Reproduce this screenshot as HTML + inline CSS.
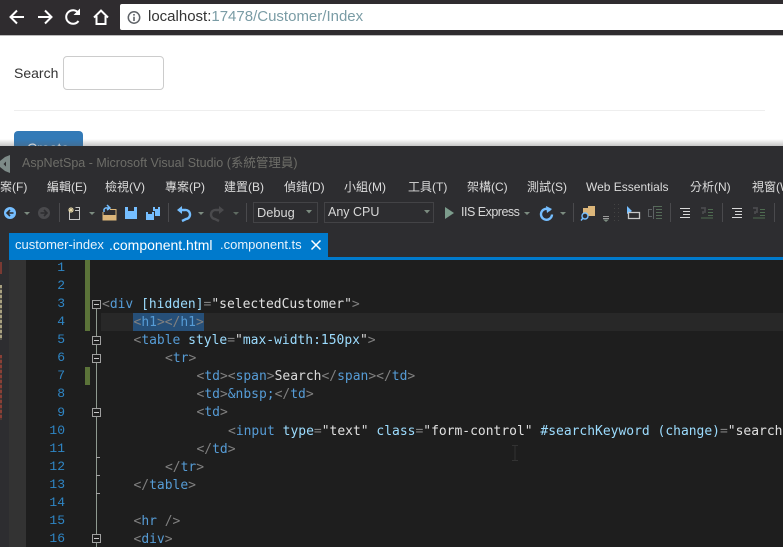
<!DOCTYPE html>
<html><head><meta charset="utf-8">
<style>
html,body{margin:0;padding:0;width:783px;height:547px;overflow:hidden;background:#fff}
body{position:relative;font-family:"Liberation Sans","Noto Sans CJK TC",sans-serif}
.a{position:absolute}
.t{position:absolute;white-space:pre}
.m{position:absolute;top:179px;font-size:12px;line-height:17px;color:#dcdcdc;white-space:pre}
.l{position:absolute;left:0;width:65px;text-align:right;font:13px/18px "Liberation Mono",monospace;color:#2f86c5}
.c{position:absolute;white-space:pre;font:12.98px/18px "DejaVu Sans Mono","Liberation Mono",monospace;color:#dcdcdc}
.c i{font-style:normal;color:#808080}
.c b{font-weight:normal;color:#569cd6}
.c u{text-decoration:none;color:#9cdcfe}
.c s{text-decoration:none;color:#e0e0e0}
.box{position:absolute;left:92px;width:7px;height:7px;border:1px solid #a0a0a0;background:#1e1e1e}
.box:after{content:"";position:absolute;left:1px;top:3px;width:5px;height:1px;background:#c8c8c8}
.tick{position:absolute;left:96px;width:4px;height:1px;background:#a5a5a5}
.sep{position:absolute;top:203px;width:1px;height:19px;background:#4a4a4d}
</style></head><body>

<!-- browser toolbar -->
<div class="a" style="left:0;top:0;width:783px;height:35px;background:#2f2c2f"></div>
<svg class="a" style="left:0;top:0" width="118" height="35" viewBox="0 0 118 35" fill="none" stroke="#fff" stroke-width="2">
<path d="M24 17H11M17 10.5L10.5 17L17 23.5"/>
<path d="M38 17H51M45 10.5L51.5 17L45 23.5"/>
<path d="M78.5 21A6.8 6.8 0 1 1 78.5 13"/><path d="M80 8.5V15H73.5Z" fill="#fff" stroke="none"/>
<path d="M94 17.5L101 10.5L108 17.5M96.5 16V24H105.5V16"/>
</svg>
<div class="a" style="left:120px;top:4px;width:663px;height:26px;background:#fff;border-radius:2px 0 0 2px"></div>
<svg class="a" style="left:126px;top:10px" width="16" height="15" viewBox="0 0 16 15" fill="none">
<circle cx="8" cy="7.5" r="5.7" stroke="#5f6368" stroke-width="1.5"/><path d="M8 6.7V11M8 4V5.6" stroke="#5f6368" stroke-width="1.6"/>
</svg>
<div class="t" style="left:148px;top:8px;font-size:15px;line-height:18px;color:#333">localhost:<span style="color:#7a9ca5">17478/Customer/Index</span></div>
<div class="a" style="left:0;top:35px;width:783px;height:1px;background:#bbb"></div>

<!-- page -->
<div class="t" style="left:14px;top:64px;font-size:14px;line-height:18px;color:#333">Search</div>
<div class="a" style="left:63px;top:56px;width:99px;height:32px;border:1px solid #ccc;border-radius:4px;background:#fff"></div>
<div class="a" style="left:14px;top:110px;width:751px;height:1px;background:#eee"></div>
<div class="a" style="left:14px;top:131px;width:69px;height:34px;background:#337ab7;border-radius:4px 4px 0 0"></div>
<div class="t" style="left:27px;top:139px;font-size:14px;line-height:18px;color:#fff">Create</div>
<div class="a" style="left:0;top:139px;width:783px;height:7px;background:linear-gradient(rgba(90,90,90,0),rgba(90,90,90,.35))"></div>

<!-- VS window -->
<div class="a" style="left:0;top:146px;width:783px;height:401px;background:#2d2d30"></div>
<svg class="a" style="left:0;top:154px" width="11" height="20" viewBox="0 0 11 20"><path d="M0 7L5 3L10 1V19L5 17L0 13ZM3.500 10L6 12.500V7.500Z" fill="#7d8a88" fill-rule="evenodd"/></svg>
<div class="t" style="left:22px;top:155px;font-size:12.5px;line-height:17px;color:#6d6d68">AspNetSpa - Microsoft Visual Studio (系統管理員)</div>

<!-- menu -->
<div class="m" style="left:0">案(F)</div>
<div class="m" style="left:47px">編輯(E)</div>
<div class="m" style="left:105px">檢視(V)</div>
<div class="m" style="left:165px">專案(P)</div>
<div class="m" style="left:224px">建置(B)</div>
<div class="m" style="left:284px">偵錯(D)</div>
<div class="m" style="left:344px">小組(M)</div>
<div class="m" style="left:408px">工具(T)</div>
<div class="m" style="left:467px">架構(C)</div>
<div class="m" style="left:527px">測試(S)</div>
<div class="m" style="left:586px">Web Essentials</div>
<div class="m" style="left:690px">分析(N)</div>
<div class="m" style="left:752px">視窗(W)</div>

<!-- toolbar left -->
<svg class="a" style="left:0;top:200px" width="340" height="26" viewBox="0 0 340 26">
<circle cx="10" cy="13" r="6" fill="#75beff"/><path d="M13.5 13H7M10 10L7 13L10 16" fill="none" stroke="#2d2d30" stroke-width="1.6"/>
<path d="M24 12H30L27 15Z" fill="#7c8c80"/>
<circle cx="44" cy="13" r="6" fill="#4a4a4d"/><path d="M40.5 13H47M44 10L47 13L44 16" fill="none" stroke="#2d2d30" stroke-width="1.6"/>
<path d="M69.500 10.500V19.500H79.500V10.500H75" fill="none" stroke="#c8c8c8" stroke-width="1"/>
<path d="M71 7V13M68 10H74M69 8L73 12M73 8L69 12" stroke="#e8d9a8" stroke-width="1"/>
<path d="M75.500 7.500H79.500V10.500" fill="none" stroke="#c8c8c8" stroke-width="1"/>
<path d="M89 12H95L92 15Z" fill="#7c8c80"/>
<path d="M103 12V20H116V9.500H110" fill="none" stroke="#dcb67a" stroke-width="1"/>
<path d="M103 15H116V20H103Z" fill="#dcb67a"/>
<path d="M104 12V9.500A2.500 2.500 0 0 1 107 8H110M107 5L110 8L107 10" fill="none" stroke="#75beff" stroke-width="1.500"/>
<path d="M125 7H137V19H125ZM128 7V11H134V7Z" fill="#75beff" fill-rule="evenodd"/>
<path d="M146 12H154V20H146ZM148 12V14H152V12Z" fill="#75beff" fill-rule="evenodd"/>
<path d="M153 7H160V16H155V11H153ZM155 7V9H158V7Z" fill="#75beff" fill-rule="evenodd"/>
<path d="M177 10L182 6V14Z" fill="#75beff"/><path d="M180 10H185A4.500 4.500 0 0 1 186 19L182 21" fill="none" stroke="#75beff" stroke-width="2.400"/>
<path d="M198 12H204L201 15Z" fill="#7c8c80"/>
<path d="M224 10L219 6V14Z" fill="#4a4a4d"/><path d="M221 10H216A4.500 4.500 0 0 0 215 19L219 21" fill="none" stroke="#4a4a4d" stroke-width="2.400"/>
<path d="M233 12H239L236 15Z" fill="#5f6b62"/>
</svg>
<div class="sep" style="left:59px"></div>
<div class="sep" style="left:168px"></div>
<div class="sep" style="left:246px"></div>

<div class="a" style="left:253px;top:202px;width:63px;height:19px;border:1px solid #434346;background:#2d2d30"></div>
<div class="t" style="left:257px;top:204px;font-size:12.8px;line-height:17px;color:#d8d8d8">Debug</div>
<svg class="a" style="left:305px;top:210px" width="8" height="5"><path d="M1 0H7L4 3.500Z" fill="#7c8c80"/></svg>
<div class="a" style="left:324px;top:202px;width:108px;height:19px;border:1px solid #434346;background:#2d2d30"></div>
<div class="t" style="left:328px;top:204px;font-size:12.5px;line-height:17px;color:#d8d8d8">Any CPU</div>
<svg class="a" style="left:423px;top:210px" width="8" height="5"><path d="M1 0H7L4 3.500Z" fill="#7c8c80"/></svg>
<svg class="a" style="left:444px;top:206px" width="12" height="14"><path d="M1 1L10 7L1 13Z" fill="#7c9c8c"/></svg>
<div class="t" style="left:461px;top:204px;font-size:12.5px;letter-spacing:-.5px;line-height:17px;color:#d8d8d8">IIS Express</div>

<!-- toolbar right -->
<svg class="a" style="left:524px;top:200px" width="259" height="26" viewBox="524 0 259 26">
<path d="M524 12H530L527 15ZM560 12H566L563 15Z" fill="#7c8c80"/>
<path d="M550.500 10.500A5.500 5.500 0 1 0 552 14.500" fill="none" stroke="#75beff" stroke-width="2.400"/><path d="M546 6L552 9L547 13Z" fill="#75beff"/>
<path d="M583 8H588V6H595V16H583Z" fill="#dcb67a"/>
<circle cx="585" cy="16" r="3" fill="#2d2d30" stroke="#75beff" stroke-width="1.400"/><path d="M583 18L581 20.500" stroke="#75beff" stroke-width="1.500"/>
<path d="M603 16.500H609M603 18.500H609" stroke="#9a9a9a"/><path d="M603 19.500H609L606 22Z" fill="#7c8c80"/>
<path d="M614.500 4V21M618.500 4V21" stroke="#444" stroke-width="1" stroke-dasharray="1 3"/>
<path d="M627 6V14L632 11Z" fill="#75beff"/><path d="M628.500 12.500H639.500V18.500H628.500Z" fill="none" stroke="#c8c8c8" stroke-width="1.300"/>
<path d="M652 9.500H648.500V16.500H652M653.500 6V19" fill="none" stroke="#5f6366"/><path d="M654 6.500H662M656 9.500H662M656 12.500H662M656 15.500H662M656 18.500H662" stroke="#556b58"/>
<path d="M680 8.500H690M683 11.500H690M683 14.500H690M680 17.500H690" stroke="#d8d8d8" stroke-width="1"/>
<path d="M701 8H705V12H703V14" fill="none" stroke="#4a4a4d" stroke-width="1.800"/><path d="M708 9.500H713M708 12.500H713M708 15.500H713M701 18H713" stroke="#4e6b50"/>
<path d="M732 8.500H742M735 11.500H742M735 14.500H742M732 17.500H742" stroke="#d8d8d8" stroke-width="1"/>
<path d="M753 8H757V12H755V14" fill="none" stroke="#4a4a4d" stroke-width="1.800"/><path d="M760 9.500H765M760 12.500H765M760 15.500H765M753 18H765" stroke="#4e6b50"/>
</svg>
<div class="sep" style="left:573px"></div>
<div class="sep" style="left:670px"></div>
<div class="sep" style="left:722px"></div>
<div class="sep" style="left:774px"></div>

<!-- tab strip -->
<div class="a" style="left:9px;top:233px;width:319px;height:26px;background:#007acc"></div>
<div class="a" style="left:9px;top:257px;width:774px;height:3px;background:#007acc"></div>
<div class="t" style="left:15px;top:236px;font-size:13px;line-height:18px;color:#e8f2fa">customer-index</div>
<div class="t" style="left:109px;top:236px;font-size:14px;line-height:18px;color:#fff">.component.html</div>
<div class="t" style="left:220px;top:236px;font-size:13px;line-height:18px;color:#e8f2fa">.component.ts</div>
<svg class="a" style="left:310px;top:239px" width="12" height="12"><path d="M1.500 1.500L10.500 10.500M10.500 1.500L1.500 10.500" stroke="#fff" stroke-width="1.500"/></svg>

<!-- editor -->
<div class="a" style="left:0;top:260px;width:783px;height:287px;background:#1e1e1e"></div>
<div class="a" style="left:0;top:260px;width:9px;height:287px;background:#2d2d30"></div>
<div class="a" style="left:9px;top:260px;width:17px;height:287px;background:#333333"></div>
<div class="a" style="left:0;top:262px;width:2px;height:12px;background:#7a3a33"></div>
<div class="a" style="left:0;top:285px;width:2px;height:55px;background:repeating-linear-gradient(#a8a080 0 3px,#55524a 3px 5px)"></div>
<div class="a" style="left:0;top:355px;width:2px;height:65px;background:repeating-linear-gradient(#8a3f36 0 3px,#4c3532 3px 5px)"></div>

<div class="a" style="left:85px;top:260px;width:5px;height:71px;background:#5b7339"></div>
<div class="a" style="left:85px;top:367px;width:5px;height:18px;background:#5b7339"></div>

<!-- current line -->
<div class="a" style="left:101px;top:313px;width:682px;height:18px;background:#282828"></div>
<div class="a" style="left:133px;top:313px;width:71px;height:18px;background:#264f78"></div>

<!-- line numbers -->
<div class="l" style="top:259px">1</div>
<div class="l" style="top:277px">2</div>
<div class="l" style="top:295px">3</div>
<div class="l" style="top:313px">4</div>
<div class="l" style="top:331px">5</div>
<div class="l" style="top:349px">6</div>
<div class="l" style="top:367px">7</div>
<div class="l" style="top:385px">8</div>
<div class="l" style="top:404px">9</div>
<div class="l" style="top:422px">10</div>
<div class="l" style="top:440px">11</div>
<div class="l" style="top:458px">12</div>
<div class="l" style="top:476px">13</div>
<div class="l" style="top:494px">14</div>
<div class="l" style="top:512px">15</div>
<div class="l" style="top:530px">16</div>

<!-- outlining -->
<div class="a" style="left:96px;top:304px;width:1px;height:243px;background:#8f9a90"></div>
<div class="box" style="top:300px"></div>
<div class="box" style="top:336px"></div>
<div class="box" style="top:354px"></div>
<div class="box" style="top:408px"></div>
<div class="box" style="top:534px"></div>
<div class="tick" style="top:457px"></div>
<div class="tick" style="top:475px"></div>
<div class="tick" style="top:493px"></div>

<!-- code -->
<div class="c" style="left:102px;top:296px"><i>&lt;</i><b>div</b> <u>[hidden]</u><i>=</i>"<s>selectedCustomer</s>"<i>&gt;</i></div>
<div class="c" style="left:133.5px;top:314px"><i>&lt;</i><b>h1</b><i>&gt;&lt;/</i><b>h1</b><i>&gt;</i></div>
<div class="c" style="left:133.5px;top:332px"><i>&lt;</i><b>table</b> <u>style</u><i>=</i>"<u>max-width:150px</u>"<i>&gt;</i></div>
<div class="c" style="left:165px;top:350px"><i>&lt;</i><b>tr</b><i>&gt;</i></div>
<div class="c" style="left:196.5px;top:368px"><i>&lt;</i><b>td</b><i>&gt;&lt;</i><b>span</b><i>&gt;</i>Search<i>&lt;/</i><b>span</b><i>&gt;&lt;/</i><b>td</b><i>&gt;</i></div>
<div class="c" style="left:196.5px;top:386px"><i>&lt;</i><b>td</b><i>&gt;</i><b>&amp;nbsp;</b><i>&lt;/</i><b>td</b><i>&gt;</i></div>
<div class="c" style="left:196.5px;top:404px"><i>&lt;</i><b>td</b><i>&gt;</i></div>
<div class="c" style="left:228px;top:423px"><i>&lt;</i><b>input</b> <u>type</u><i>=</i>"<s>text</s>" <u>class</u><i>=</i>"<s>form-control</s>" <u>#searchKeyword</u> <u>(change)</u><i>=</i>"<s>search</s></div>
<div class="c" style="left:196.5px;top:441px"><i>&lt;/</i><b>td</b><i>&gt;</i></div>
<div class="c" style="left:165px;top:459px"><i>&lt;/</i><b>tr</b><i>&gt;</i></div>
<div class="c" style="left:133.5px;top:477px"><i>&lt;/</i><b>table</b><i>&gt;</i></div>
<div class="c" style="left:133.5px;top:513px"><i>&lt;</i><b>hr</b> <i>/&gt;</i></div>
<div class="c" style="left:133.5px;top:531px"><i>&lt;</i><b>div</b><i>&gt;</i></div>

<svg class="a" style="left:511px;top:445px" width="8" height="16"><path d="M1 .5H7M1 15.500H7M4 .5V15.500" stroke="#333" fill="none"/></svg>
</body></html>
